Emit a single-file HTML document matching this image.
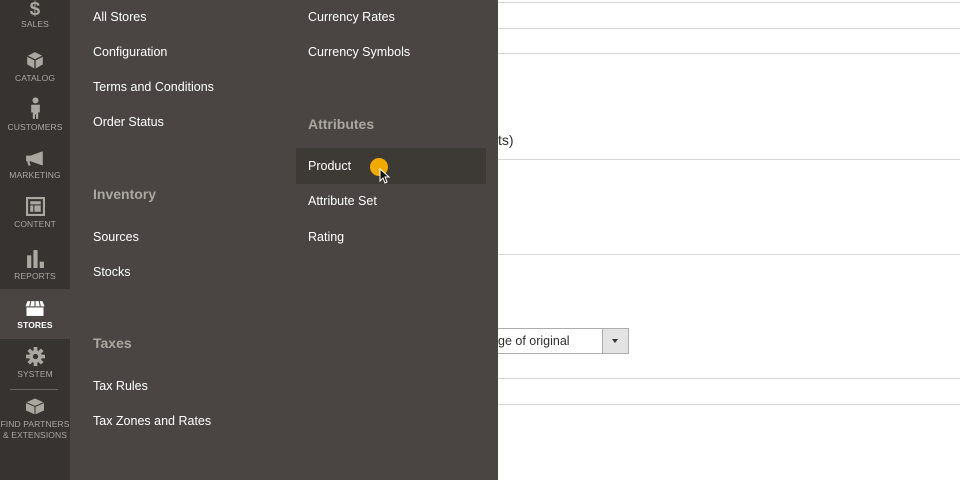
<!DOCTYPE html>
<html><head><style>
*{margin:0;padding:0;box-sizing:border-box}
body{width:960px;height:480px;overflow:hidden;background:#fff;font-family:"Liberation Sans",sans-serif;position:relative}
.side{position:absolute;left:0;top:0;width:70px;height:480px;background:#373330}
.it{position:absolute;left:0;width:70px;text-align:center;color:#aaa6a0;font-size:8.5px;letter-spacing:0.1px}
.it svg{display:block;margin:0 auto 3px}
.act{background:#4a4542;color:#fff;font-weight:bold}
.panel{position:absolute;left:70px;top:0;width:428px;height:480px;background:#4a4542}
.m{position:absolute;color:#fff;font-size:12.5px}
.h{position:absolute;color:#aaa6a0;font-size:14px;font-weight:bold}
.line{position:absolute;left:498px;right:0;height:1px;background:#d6d6d6}
</style></head><body>
<div class="line" style="top:2px"></div>
<div class="line" style="top:28px"></div>
<div class="line" style="top:53px"></div>
<div class="line" style="top:159px"></div>
<div class="line" style="top:254px"></div>
<div class="line" style="top:378px"></div>
<div class="line" style="top:404px"></div>
<div style="position:absolute;left:498px;top:132px;font-size:14px;color:#303030">ts)</div>
<div style="position:absolute;left:480px;top:328px;width:149px;height:26px;border:1px solid #adadad;background:#fff"></div>
<div style="position:absolute;left:498px;top:334px;font-size:12.5px;color:#303030">ge of original</div>
<div style="position:absolute;left:602px;top:328px;width:27px;height:26px;border:1px solid #adadad;background:#e3e3e3"></div>
<div style="position:absolute;left:612px;top:339px;width:0;height:0;border-left:3.5px solid transparent;border-right:3.5px solid transparent;border-top:4px solid #333"></div>

<div class="side">
<div class="it" style="top:0;height:40px;padding-top:1px"><div style="font-size:19px;font-weight:bold;color:#aaa6a0;line-height:18px">$</div>SALES</div>
<div class="it" style="top:51px"><svg width="18" height="19" viewBox="0 0 16 17"><path d="M8 1L15 4.5V12L8 16L1 12V4.5Z" fill="#aaa6a0"/><path d="M1 4.5L8 8L15 4.5M8 8V16" stroke="#373330" stroke-width="1.2" fill="none"/></svg>CATALOG</div>
<div class="it" style="top:97px"><svg width="13" height="22" viewBox="0 0 12 20"><circle cx="6" cy="3" r="2.8" fill="#aaa6a0"/><path d="M2 7h8v7h-1.5v6h-2v-4h-1v4h-2v-6H2z" fill="#aaa6a0"/></svg>CUSTOMERS</div>
<div class="it" style="top:151px"><svg width="20" height="16" viewBox="0 0 18 14"><path d="M1 4h4l11-4v13L5 9H4l1 4H3L2 9H1z" fill="#aaa6a0"/></svg>MARKETING</div>
<div class="it" style="top:197px"><svg width="19" height="19" viewBox="0 0 18 18"><rect x="1" y="1" width="16" height="16" fill="none" stroke="#aaa6a0" stroke-width="2"/><rect x="4" y="4" width="10" height="3" fill="#aaa6a0"/><rect x="4" y="8" width="3" height="6" fill="#aaa6a0"/><rect x="8" y="8" width="6" height="6" fill="#aaa6a0"/></svg>CONTENT</div>
<div class="it" style="top:249px"><svg width="19" height="19" viewBox="0 0 18 18"><rect x="1" y="6" width="4" height="12" fill="#aaa6a0"/><rect x="7" y="1" width="4" height="17" fill="#aaa6a0"/><rect x="13" y="12" width="4" height="6" fill="#aaa6a0"/></svg>REPORTS</div>
<div class="it act" style="top:289px;height:50px;padding-top:11px"><svg width="22" height="17" viewBox="0 0 20 16"><path d="M3 1h14l2 5H1z" fill="#fff"/><path d="M6 1L5 6M10 1V6M14 1l1 5" stroke="#4a4542" stroke-width="1"/><rect x="2" y="7" width="16" height="8" fill="#fff"/></svg>STORES</div>
<div class="it" style="top:347px"><svg width="19" height="19" viewBox="0 0 18 18"><circle cx="9" cy="9" r="6" fill="#aaa6a0"/><path d="M9 0v18M0 9h18M2.6 2.6l12.8 12.8M15.4 2.6L2.6 15.4" stroke="#aaa6a0" stroke-width="3.5"/><circle cx="9" cy="9" r="2.5" fill="#373330"/></svg>SYSTEM</div>
<div style="position:absolute;left:10px;top:389px;width:48px;height:1px;background:#6a6561"></div>
<div class="it" style="top:397px;line-height:11px"><svg width="20" height="19" viewBox="0 0 20 18"><path d="M10 1L19 5V13L10 17L1 13V5Z" fill="#aaa6a0"/><path d="M1 5L10 9L19 5M10 9V17" stroke="#373330" stroke-width="1" fill="none"/></svg>FIND PARTNERS<br>&amp; EXTENSIONS</div>
</div>

<div class="panel">
<div class="m" style="left:23px;top:10px">All Stores</div>
<div class="m" style="left:23px;top:45px">Configuration</div>
<div class="m" style="left:23px;top:80px">Terms and Conditions</div>
<div class="m" style="left:23px;top:115px">Order Status</div>
<div class="h" style="left:23px;top:186px">Inventory</div>
<div class="m" style="left:23px;top:230px">Sources</div>
<div class="m" style="left:23px;top:265px">Stocks</div>
<div class="h" style="left:23px;top:335px">Taxes</div>
<div class="m" style="left:23px;top:379px">Tax Rules</div>
<div class="m" style="left:23px;top:414px">Tax Zones and Rates</div>
<div class="m" style="left:238px;top:10px">Currency Rates</div>
<div class="m" style="left:238px;top:45px">Currency Symbols</div>
<div class="h" style="left:238px;top:116px">Attributes</div>
<div style="position:absolute;left:226px;top:148px;width:190px;height:36px;background:#3d3935"></div>
<div class="m" style="left:238px;top:159px">Product</div>
<div style="position:absolute;left:300px;top:158px;width:18px;height:18px;border-radius:50%;background:#f2a900"></div>
<svg style="position:absolute;left:309px;top:168px" width="11" height="16" viewBox="0 0 11 16"><path d="M1 1v12l3-3 2 5 2-1-2-5h4z" fill="#111" stroke="#fff" stroke-width="1"/></svg>
<div class="m" style="left:238px;top:194px">Attribute Set</div>
<div class="m" style="left:238px;top:230px">Rating</div>
</div>
</body></html>
